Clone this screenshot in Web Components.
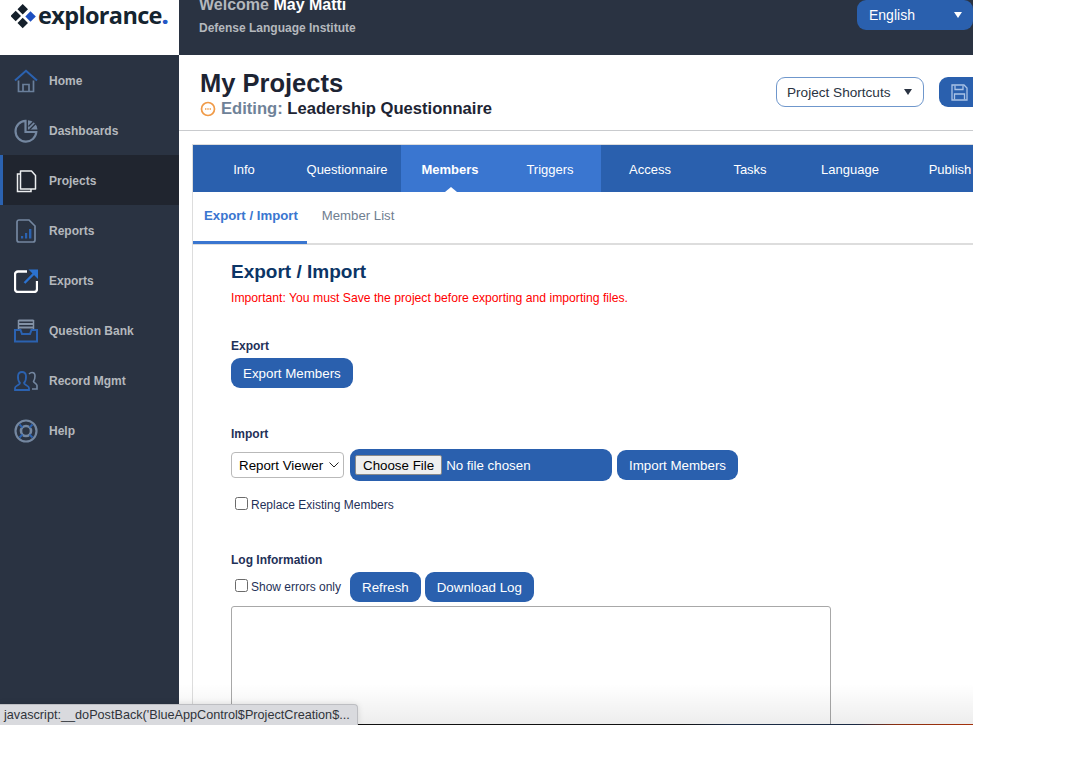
<!DOCTYPE html>
<html lang="en"><head><meta charset="utf-8"><title>My Projects</title>
<style>
html,body{margin:0;padding:0;background:#fff;font-family:"Liberation Sans",Arial,sans-serif;}
body{height:760px;overflow:hidden}
</style></head><body>
<x-app></x-app>
<script>
const def=(name,html,init)=>customElements.define(name,class extends HTMLElement{
  constructor(){super();const r=this.attachShadow({mode:'open'});r.innerHTML=html;}
  connectedCallback(){if(init)init(this);}
});
const ICONS={
home:`<svg width="24" height="24" viewBox="0 0 24 24" fill="none"><path d="M4.500 11.500v11h15v-11" stroke="#6a7f9b" stroke-width="1.700"/><path d="M9 22.500v-7h6v7" stroke="#6a7f9b" stroke-width="1.700"/><path d="M1 11.500 12 1.800l11 9.700" stroke="#2b62b0" stroke-width="2.100"/></svg>`,
dash:`<svg width="24" height="24" viewBox="0 0 24 24" fill="none"><path d="M11.500 1.800A10.400 10.400 0 1 0 22.300 13H11.500z" stroke="#7487a0" stroke-width="2.200"/><path d="M14 1.200a10 10 0 0 1 9.500 9.300H14z" fill="#7487a0"/><path d="M14.500 7.500 19.500 2.500M15.500 10.800l6-6" stroke="#2a3342" stroke-width="1.300"/></svg>`,
proj:`<svg width="24" height="24" viewBox="0 0 24 24" fill="none"><path d="M6.500 2h11l4 4.500V20h-15z" stroke="#eceef0" stroke-width="1.500" stroke-linejoin="round"/><path d="M6.500 5H3.500v17.500H17V20" stroke="#eceef0" stroke-width="1.500"/></svg>`,
rep:`<svg width="20" height="24" viewBox="0 0 20 24" fill="none"><path d="M1 3a2 2 0 0 1 2-2h10l6 6v14a2 2 0 0 1-2 2H3a2 2 0 0 1-2-2z" stroke="#7487a0" stroke-width="1.700"/><path d="M5 17h2.200v2.500H5zM9 14h2.200v5.500H9zM13 10h2.400v9.500H13z" fill="#2b62b0"/></svg>`,
exp:`<svg width="24" height="24" viewBox="0 0 24 24" fill="none"><path d="M13 2.500H4a3 3 0 0 0-3 3V20a3 3 0 0 0 3 3h16a3 3 0 0 0 3-3v-8" stroke="#fff" stroke-width="2.300"/><path d="M10.500 14 21 3.500" stroke="#2b72d0" stroke-width="2.400"/><path d="M14.500 0.500H24V10z" fill="#2b72d0"/></svg>`,
bank:`<svg width="24" height="24" viewBox="0 0 24 24" fill="none"><path d="M4.500 1.500h15M4.500 5h15M4.500 8.500h15" stroke="#8392a6" stroke-width="2"/><path d="M4.500 1v10M19.500 1v10" stroke="#8392a6" stroke-width="1.500"/><path d="M1 22.500V11h5.500l1.500 4h8l1.500-4H23v11.500z" stroke="#2b62b0" stroke-width="2" fill="#2a3342"/></svg>`,
rec:`<svg width="24" height="24" viewBox="0 0 24 24" fill="none"><path d="M1 21v-2c0-2.500 5-3 5-5-2-2-2.200-4-2-7 .2-2.500 2-4 4-4s3.800 1.500 4 4c.2 3 0 5-2 7 0 2 5 2.500 5 5v2z" stroke="#2b62b0" stroke-width="1.800"/><path d="M15 5c1-1 2-1.500 3-1.500 2 0 3 1.500 3 3.500 0 2.500-.5 4-1.500 5.500 0 1 3.500 2 3.500 4v3.500h-5" stroke="#7487a0" stroke-width="1.600"/></svg>`,
help:`<svg width="24" height="24" viewBox="0 0 24 24" fill="none"><circle cx="12" cy="12" r="10.500" stroke="#7487a0" stroke-width="2.200"/><circle cx="12" cy="12" r="5" stroke="#7487a0" stroke-width="2.600"/><path d="M5.500 5.500l3 3M18.500 5.500l-3 3M5.500 18.500l3-3M18.500 18.500l-3-3" stroke="#2b62b0" stroke-width="2"/></svg>`};

def('x-logo',`<style>:host{display:flex;align-items:flex-start;height:55px;background:#fff;box-sizing:border-box;padding:4px 0 0 11px;gap:1px}
span{font:700 23.500px/22px "Open Sans",Lato,sans-serif;color:#152430;letter-spacing:-.65px}b{color:#2457c5}</style>
<svg width="26" height="25" viewBox="0 0 26 25"><path d="M11.700 0 17 5.200 11.700 10.400 6.500 5.200zM4.700 6.800 10 12 4.700 17.200-.5 12zM11.700 13.800 17 19 11.700 24.200 6.500 19z" fill="#15202b"/><path d="M19.500 7.300 24.800 12.500 19.500 17.700 14.300 12.500z" fill="#1d4fc0"/></svg><span>explorance<b>.</b></span>`);

def('x-nav-item',`<style>:host{display:flex;align-items:center;height:50px;box-sizing:border-box;padding:1px 0 0 13px;gap:11px;font:700 12px/1 "Liberation Sans",sans-serif;color:#b4b8bd;border-left:0 solid #2b62b0}
:host([active]){background:#20252f;border-left-width:3px;padding-left:10px}
i{display:flex;width:25px;height:24px;justify-content:center;align-items:center}</style><i></i><slot></slot>`,
el=>{el.shadowRoot.querySelector('i').innerHTML=ICONS[el.getAttribute('icon')];});

def('x-sidebar',`<style>:host{display:flex;flex-direction:column;width:179px;flex:none;background:#2a3342}</style><x-logo></x-logo><slot></slot>`);

def('x-topbar',`<style>:host{display:flex;justify-content:space-between;height:55px;background:#2a3342;padding:0 0 0 20px;flex:none;box-sizing:border-box;overflow:hidden}
.w{margin-top:-4px;color:#b4b8bd;font:700 16px/18px "Liberation Sans",sans-serif}.w b{color:#fff}
.o{font-size:12px;line-height:14px;margin-top:7px}
.l{box-sizing:border-box;width:116px;height:30px;background:#2a60ae;color:#fff;border-radius:9px;padding:0 12px;display:flex;align-items:center;justify-content:space-between;font:14px "Liberation Sans",sans-serif}
.l i{border:4.500px solid transparent;border-top:6px solid #fff;border-bottom:0;margin-right:-1px}</style>
<div class="w">Welcome <b>May Matti</b><div class="o">Defense Language Institute</div></div><div class="l">English<i></i></div>`);

def('x-pagehead',`<style>:host{display:flex;justify-content:space-between;height:76px;box-sizing:border-box;border-bottom:1px solid #c9cbce;padding:14px 0 0 21px;flex:none;overflow:hidden}
h1{margin:0;font:700 25.500px/29px "Liberation Sans",sans-serif;color:#1d2433}
.e{display:flex;align-items:center;gap:5px;font:700 16.600px/20px "Liberation Sans",sans-serif;color:#1d2433;margin-top:1px}
.e em{font-style:normal;color:#6f8298}
.r{display:flex;gap:15px;margin-top:8px;flex:none;margin-right:-15px}
.s{box-sizing:border-box;width:148px;height:30px;border:1px solid #6f97cc;border-radius:9px;display:flex;align-items:center;justify-content:space-between;padding:0 11px 0 10px;font:13.600px "Liberation Sans",sans-serif;color:#2a3342}
.s i{border:4.500px solid transparent;border-top:6px solid #2a3342;border-bottom:0}
.b{width:49px;height:30px;background:#2a60ae;border-radius:9px;display:flex;align-items:center;padding-left:12px;box-sizing:border-box}</style>
<div><h1>My Projects</h1><div class="e"><svg width="16" height="16" viewBox="0 0 16 16" fill="none"><circle cx="8" cy="8" r="6.500" stroke="#f09a47" stroke-width="1.700"/><path d="M5 8h6" stroke="#f09a47" stroke-width="1.400" stroke-dasharray="1.400 .9"/></svg><span><em>Editing:</em> Leadership Questionnaire</span></div></div>
<div class="r"><div class="s">Project Shortcuts<i></i></div><div class="b"><svg width="17" height="17" viewBox="0 0 17 17" fill="none"><path d="M1 1h12l3 3v12H1z" stroke="#a9c2e6" stroke-width="1.300"/><path d="M4 1.500v4h8v-4M3.500 15.500V10h10v5.500" stroke="#a9c2e6" stroke-width="1.300"/></svg></div></div>`);

def('x-tab',`<style>:host{display:flex;align-items:center;justify-content:center;flex:none;width:100px;height:47px;font:13px "Liberation Sans",sans-serif;color:#fff;position:relative;padding:1px 2px 0 0;box-sizing:border-box}
:host([wide]){width:108px;padding-right:0}:host([first]){padding:1px 0 0 2px}:host([light]){background:#3a76d0}:host([active]){background:#3a76d0;font-weight:700}
:host([active])::after{content:"";position:absolute;left:50%;bottom:0;margin-left:-6px;border:6px solid transparent;border-bottom:5px solid #fff;border-top:0}</style><slot></slot>`);

def('x-tabs',`<style>:host{display:flex;height:47px;background:#2a60ae;flex:none}</style><slot></slot>`);

def('x-subtab',`<style>:host{display:flex;align-items:center;height:52px;box-sizing:border-box;padding:0 9px 3px 11px;font:13.200px "Liberation Sans",sans-serif;color:#6f7e90;border-bottom:3px solid transparent;margin-bottom:-2px}
:host([active]){color:#3a76d0;font-weight:700;border-bottom-color:#3a76d0}</style><slot></slot>`);

def('x-subtabs',`<style>:host{display:flex;gap:4px;height:51px;border-bottom:2px solid #ddd;flex:none}</style><slot></slot>`);

def('x-btn',`<style>:host{display:inline-flex;align-items:center;justify-content:center;height:30px;box-sizing:border-box;padding:0 12px;background:#2a60ae;color:#fff;border-radius:9px;font:13.330px "Liberation Sans",sans-serif;flex:none}</style><slot></slot>`);

def('x-check',`<style>:host{display:inline-flex;align-items:center;gap:3px;font:12px "Liberation Sans",sans-serif;color:#1f3158}
i{box-sizing:border-box;display:block;width:13px;height:13px;border:1px solid #6b6b6b;border-radius:2.500px;background:#fff;position:relative;top:-2px}</style><i></i><slot></slot>`);

def('x-label',`<style>:host{display:block;font:700 12px/14px "Liberation Sans",sans-serif;color:#1f3158}</style><slot></slot>`);

def('x-export-panel',`<style>:host{display:block;padding:15px 0 0 38px;overflow:hidden;flex:1;min-height:0}
h2{margin:0;font:700 19px/24px "Liberation Sans",sans-serif;color:#0b3566}
.w{font:12.200px/14px "Liberation Sans",sans-serif;color:#f00;margin-top:7px}
.row{display:flex;align-items:center}
select{appearance:none;height:26px;width:113px;box-sizing:border-box;font:13.330px "Liberation Sans",sans-serif;border:1px solid #b9b9b9;border-radius:4px;color:#000;padding:0 0 0 7px;flex:none;background:#fff url("data:image/svg+xml,%3Csvg xmlns='http://www.w3.org/2000/svg' width='10' height='6'%3E%3Cpath d='M.5.500 5 5 9.500.500' fill='none' stroke='%23222' stroke-width='1'/%3E%3C/svg%3E") no-repeat right 4px center}
.f{box-sizing:border-box;width:262px;height:32px;margin-left:6px;background:#2a60ae;border-radius:9px;padding:0 0 0 5px;display:flex;align-items:center;overflow:hidden;flex:none}
input[type=file]{font:13.330px "Liberation Sans",sans-serif;color:#fff;width:250px}
input[type=file]::file-selector-button{font:13.330px "Liberation Sans",sans-serif;color:#000;background:#efefef;border:1px solid #8a8a8a;border-radius:2px;height:20px;padding:0 7px;margin-right:4px}
.ta{box-sizing:border-box;width:600px;height:150px;border:1px solid #a8a8a8;border-radius:3px;margin-top:4px;background:#fff}</style>
<h2>Export / Import</h2><div class="w">Important: You must Save the project before exporting and importing files.</div>
<x-label style="margin-top:34px">Export</x-label>
<x-btn style="margin-top:5px">Export Members</x-btn>
<x-label style="margin-top:39px">Import</x-label>
<div class="row" style="margin-top:8px;height:32px"><select><option>Report Viewer</option></select><div class="f"><input type="file"></div><x-btn style="margin-left:5px">Import Members</x-btn></div>
<div style="margin:9px 0 0 4px;height:30px;display:flex;align-items:center"><x-check>Replace Existing Members</x-check></div>
<x-label style="margin-top:33px">Log Information</x-label>
<div class="row" style="margin-top:5px;height:30px"><x-check style="margin-left:4px">Show errors only</x-check><x-btn style="margin-left:9px">Refresh</x-btn><x-btn style="margin-left:4px">Download Log</x-btn></div>
<div class="ta"></div>`);

def('x-status',`<style>:host{position:absolute;left:0;bottom:0;height:21px;width:358px;box-sizing:border-box;background:#d9dade;border:1px solid #bdbec2;border-left:0;border-bottom:0;border-radius:0 4px 0 0;font:12.660px/20px "Liberation Sans",sans-serif;color:#30343a;padding-left:4px;white-space:nowrap;overflow:hidden;box-shadow:0 0 6px rgba(0,0,0,.12)}</style><slot></slot>`);

def('x-app',`<style>:host{display:block;width:973px;height:725px;position:relative;overflow:hidden}
.shell{display:flex;height:724px;background:#fff;overflow:hidden}
main{display:flex;flex-direction:column;flex:1;min-width:0;overflow:hidden}
.frame{flex:1;min-height:0;margin:13px 0 0 13px;border:solid #ddd;border-width:1px 0 0 1px;display:flex;flex-direction:column;width:830px;overflow:hidden}
.fade{position:absolute;left:179px;right:0;top:684px;height:40px;background:linear-gradient(rgba(0,0,0,0),rgba(0,0,0,.07));pointer-events:none}
.line{position:absolute;left:0;right:0;top:724px;height:1px;background:linear-gradient(90deg,#111 0,#111 70%,#1a2a44 75%,#1a2a44 88%,#8a2f10 92%,#a5320c 100%)}</style>
<div class="shell"><x-sidebar>
<x-nav-item icon="home">Home</x-nav-item><x-nav-item icon="dash">Dashboards</x-nav-item><x-nav-item icon="proj" active>Projects</x-nav-item><x-nav-item icon="rep">Reports</x-nav-item><x-nav-item icon="exp">Exports</x-nav-item><x-nav-item icon="bank">Question Bank</x-nav-item><x-nav-item icon="rec">Record Mgmt</x-nav-item><x-nav-item icon="help">Help</x-nav-item>
</x-sidebar><main><x-topbar></x-topbar><x-pagehead></x-pagehead>
<div class="frame"><x-tabs><x-tab first>Info</x-tab><x-tab wide>Questionnaire</x-tab><x-tab active>Members</x-tab><x-tab light>Triggers</x-tab><x-tab>Access</x-tab><x-tab>Tasks</x-tab><x-tab>Language</x-tab><x-tab>Publish</x-tab></x-tabs>
<x-subtabs><x-subtab active>Export / Import</x-subtab><x-subtab>Member List</x-subtab></x-subtabs><x-export-panel></x-export-panel></div>
</main></div><div class="fade"></div><div class="line"></div><x-status>javascript:__doPostBack('BlueAppControl$ProjectCreation$...</x-status>`);
</script>
</body></html>
